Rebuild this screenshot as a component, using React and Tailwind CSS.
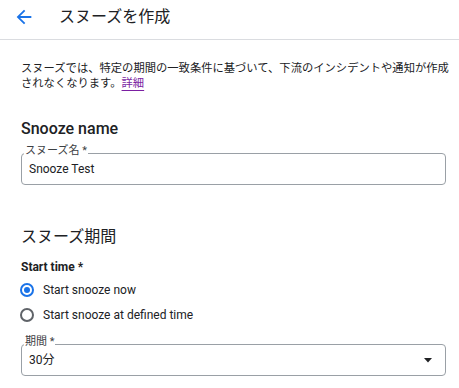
import React from "react";

const font = { fontFamily: "Roboto, 'Noto Sans CJK JP', sans-serif" };

const Radio = ({ checked, label }) => (
  <div className="flex h-[25px] items-center">
    <span
      className={
        "ml-[20px] flex h-[14px] w-[14px] items-center justify-center rounded-full border-2 " +
        (checked ? "border-[#1a73e8]" : "border-[#5f6368]")
      }
    >
      {checked && <span className="h-[6px] w-[6px] rounded-full bg-[#1a73e8]" />}
    </span>
    <span className="ml-[9px] text-[12px] text-[#202124]">{label}</span>
  </div>
);

const Outlined = ({ label, children }) => (
  <div className="relative flex h-[32px] w-[425px] items-center rounded-[4px] border border-[#9aa0a6] pl-[7px] pr-[13px]">
    <span className="absolute -top-[10px] left-[2px] bg-white px-[1px] text-[11px] leading-[14px] text-[#3c4043]">
      {label}
    </span>
    {children}
  </div>
);

export default function App() {
  return (
    <div className="h-[388px] w-[459px] overflow-hidden bg-white text-[#202124]" style={font}>
      {/* header */}
      <div className="flex h-[40px] items-center border-b border-[#dadce0] pb-[5px]">
        <svg className="ml-[13px]" width="22" height="22" viewBox="0 0 24 24" fill="#1a73e8">
          <path d="M20 11H7.83l5.59-5.59L12 4l-8 8 8 8 1.41-1.41L7.83 13H20v-2z" />
        </svg>
        <h1 className="ml-[24px] text-[16px] leading-[20px] text-[#202124]">スヌーズを作成</h1>
      </div>

      <div className="px-[21px]">
        <p className="mt-[22px] w-[440px] text-[11.3px] leading-[14.5px] text-[#202124]">
          スヌーズでは、特定の期間の一致条件に基づいて、下流のインシデントや通知が作成
          <br />
          されなくなります。
          <a className="text-[#7b1fa2] underline underline-offset-[3px]">詳細</a>
        </p>

        <h2 className="mt-[28px] text-[16px] font-medium leading-[20px]">Snooze name</h2>
        <div className="mt-[14px]">
          <Outlined label="スヌーズ名 *">
            <span className="text-[12px]">Snooze Test</span>
          </Outlined>
        </div>

        <h2 className="mt-[42px] text-[16px] leading-[20px]">スヌーズ期間</h2>
        <div className="mt-[12px] text-[12px] font-bold leading-[16px]">Start time *</div>
      </div>

      <div className="mt-[2px]">
        <Radio checked label="Start snooze now" />
        <Radio label="Start snooze at defined time" />
      </div>

      <div className="mt-[17px] px-[21px]">
        <Outlined label="期間 *">
          <span className="flex-1 text-[12px]">30分</span>
          <svg width="8" height="5" viewBox="0 0 8 5">
            <path d="M0 0h8L4 4.5z" fill="#202124" />
          </svg>
        </Outlined>
      </div>
    </div>
  );
}
